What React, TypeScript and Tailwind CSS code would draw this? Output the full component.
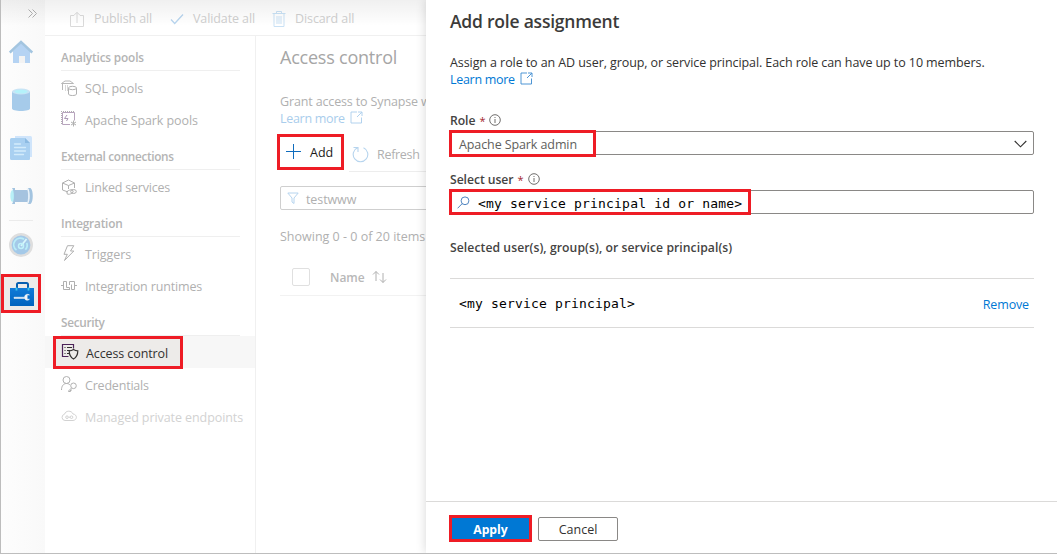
import React from "react";

type P = { className?: string };
const S = ({ className = "", children, vb = "0 0 16 16", w = 16, h = 16 }: { className?: string; children: React.ReactNode; vb?: string; w?: number; h?: number }) => (
  <svg width={w} height={h} viewBox={vb} fill="none" stroke="currentColor" className={`shrink-0 ${className}`}>{children}</svg>
);

const HomeIcon = () => (
  <S w={24} h={24} vb="0 0 24 24">
    <path d="M4 11v12h6v-7h6v7h5V11l-9-8z" fill="#b5d3f3" stroke="none" />
    <path d="M10 16h6v7h-6z" fill="#f3f3f3" stroke="none" />
    <path d="M.800 12.500 12 2l11.200 10.500" stroke="#a3c5e0" strokeWidth="2.4" />
  </S>
);
const DatabaseIcon = () => (
  <S w={24} h={24} vb="0 0 24 24">
    <path d="M3 3.500v17c0 1.500 4 2.500 9 2.500s9-1 9-2.500v-17z" fill="#a6cbea" stroke="none" />
    <ellipse cx="12" cy="3.500" rx="9" ry="3" fill="#c9e4f5" stroke="none" />
    <ellipse cx="12" cy="3.600" rx="6.500" ry="1.900" fill="#b4f2fa" stroke="none" />
  </S>
);
const DocsIcon = () => (
  <S w={24} h={26} vb="0 0 24 26">
    <path d="M6 1h15.500a1.500 1.500 0 0 1 1.500 1.500V22H6z" fill="#d0e5fb" stroke="none" />
    <path d="M2.500 3H16l5 5v16a1 1 0 0 1-1 1H2.500A1.500 1.500 0 0 1 1 23.500v-19A1.500 1.500 0 0 1 2.500 3z" fill="#a9d0f1" stroke="none" />
    <path d="M16 3v5h5z" fill="#8dbbe2" stroke="none" />
    <path d="M5.500 9h6M5.500 12.500h11M5.500 16h11M5.500 19.500h9" stroke="#d3ebfb" strokeWidth="1.300" strokeLinecap="round" />
  </S>
);
const PipeIcon = () => (
  <S w={24} h={18} vb="0 0 24 18">
    <path d="M5 3h14v12H5z" fill="#a5c3df" stroke="none" />
    <ellipse cx="3.500" cy="9" rx="2.200" ry="6" fill="#b8f0f7" stroke="none" />
    <path d="M3 1h3v2c1 3 1 9 0 12v2H3c2.500-3 2.500-13 0-16zM19 1h2.500c3 2 3 14 0 16H19c2.200-3 2.200-13 0-16z" fill="#a3c4e0" stroke="none" />
    <path d="M18.300 1.500c1.700 3 1.700 12 0 15" stroke="#e2eff9" />
  </S>
);
const GaugeIcon = () => (
  <S w={24} h={24} vb="0 0 24 24">
    <circle cx="12" cy="12" r="10.700" fill="#a4c9e8" stroke="#dedede" strokeWidth="2.600" />
    <path d="M7.500 17A6.500 6.500 0 0 1 15 6.300M17.800 10a6.500 6.500 0 0 1-1.500 6.700" stroke="#b9edf8" strokeWidth="1.700" />
    <path d="m12 13 5.500-7" stroke="#d9f7fc" strokeWidth="1.800" />
    <circle cx="12" cy="13" r="2.500" stroke="#c0f2fa" strokeWidth="1.500" />
  </S>
);
const ToolboxIcon = () => (
  <S w={26} h={26} vb="0 0 26 26">
    <defs><linearGradient id="tb" x1="0" y1="0" x2="0" y2="1"><stop stopColor="#117bd8" /><stop offset="1" stopColor="#0063bd" /></linearGradient></defs>
    <path d="M8 7V3.500C8 2.700 8.500 2 9.500 2h8c1 0 1.500.7 1.500 1.500V7" stroke="#075fb0" strokeWidth="2" />
    <path d="M1 7h24v18H1z" fill="url(#tb)" stroke="none" />
    <path d="M7.500 6.500v3M19.500 6.500v3" stroke="#3fc5ea" strokeWidth="1.800" />
    <path d="M5 16.200h10.500a3 3 0 0 1 5-2.200h-2.300v4.200h2.300a3 3 0 0 1-5-.800H5z" fill="#f2f5f8" stroke="#f2f5f8" strokeWidth=".5" />
  </S>
);
const PublishIcon = () => (
  <S className="text-[#dadada]"><path d="M5 4.500H1.500v11h13v-11H11M8 12V1.500M4.800 4.500 8 1.300l3.200 3.200" /></S>
);
const CheckIcon = () => (
  <S w={14} h={12} vb="0 0 14 12" className="text-[#b8d5ef]"><path d="m1 6.500 3.700 4L13 1.500" strokeWidth="1.300" /></S>
);
const TrashIcon = () => (
  <S w={14} h={18} vb="0 0 14 18" className="text-[#c9e1f5]"><path d="M.5 3.500h13M4.500 3V1.500h5V3M2 3.500v13h10v-13M5 6v8M7 6v8M9 6v8" /></S>
);
const SqlIcon = () => (
  <S className="-mt-[3px]"><path d="M.500 3.500 4 1h5l3.500 2.500zM1.500 4v6" strokeWidth=".9" /><path d="M4.500 5.500v5M6.500 5.500v5" strokeDasharray="1 1" /><path d="M7.500 8v6c0 1 2 1.500 4 1.500s4-.500 4-1.500V8" fill="white" /><ellipse cx="11.500" cy="8" rx="4" ry="1.700" fill="white" /></S>
);
const SparkIcon = () => (
  <S className="-mt-[4px]"><path d="M1.500 1.500h12v8M1.500 1.500v12H9" stroke="#b7a4bd" /><path d="M.5 0v14M0 .500h14" strokeDasharray="1 1" /><path d="M6 4 3.500 7.500H7L5.500 10" stroke="#ab9ab4" /><path d="M12.500 9.500v6M10 11l5 3M15 11l-5 3" /></S>
);
const LinkedIcon = () => (
  <S className="-mt-[3px]"><path d="M7 13 1.500 11V4L7.500 1l6 3v5M1.500 4l6 2.500 6-2.500M7.500 6.500V10" /><ellipse cx="9" cy="13" rx="3.200" ry="2" transform="rotate(-20 9 13)" /><ellipse cx="12.500" cy="12.500" rx="2.800" ry="2" /></S>
);
const BoltIcon = () => (
  <S className="-mt-[4px]"><path d="M6.500.700h6.300L9.500 6h3.300L3.500 15.500l2.800-6.200H3z" /></S>
);
const RuntimeIcon = () => (
  <S className="-mt-[2px]"><path d="M0 7.500h2.500M5.500 3.500h-3v8H5M5.500 3.500v6h3v2.500M5 11.500h3.500M8.500 7V3.500h5v8h-3V6.500M13.500 7.500H16" /></S>
);
const AccessIcon = () => (
  <S w={18} h={18} vb="0 0 18 18" className="-mt-[3px] text-[#323130]"><path d="M7.500 13.500h-6v-12h11v4" stroke="#4b2358" strokeWidth="1.200" /><path d="M3.500 4.500h1M6 4.500h5M3.500 7.500h1M6 7.500h3M3.500 10.500h1M6 10.500h2" /><path d="M12.500 6.500c1.500 1 2.500 1.300 4.300 1.300 0 4-1.200 6.600-4.300 8.200-3.100-1.600-4.300-4.200-4.300-8.200 1.800 0 2.800-.300 4.300-1.300z" strokeWidth="1.200" /></S>
);
const CredIcon = () => (
  <S className="-mt-[4px]"><circle cx="5.500" cy="4" r="3.500" /><path d="M.5 14c0-4 2-6.500 5-6.500 1.500 0 2.500.5 3.500 1.500" /><circle cx="12.500" cy="9.800" r="2.800" /><path d="m10.500 12-3 3v.500h2v-1.500H11" /></S>
);
const CloudIcon = () => (
  <S className="-mt-[4px]"><path d="M4 12.500a3.200 3.200 0 0 1-.5-6.300C4.500 2.500 10.500 2 12 6c4.500.500 4.500 6 0 6.500zM7.500 9.200h1.500" /><circle cx="6" cy="9.200" r="1.300" /><circle cx="10.500" cy="9.200" r="1.300" /></S>
);
const ExternalIcon = ({ className = "" }: P) => (
  <S w={13} h={13} vb="0 0 13 13" className={`-mt-[2px] ${className}`}><path d="M7 1H1v11h10.500V6.500M8 1h4v4M11.800 1.200 7 6" strokeWidth=".9" /></S>
);
const InfoIcon = () => (
  <S w={12} h={12} vb="0 0 12 12" className="text-[#605e5c]"><circle cx="6" cy="6" r="5.300" strokeWidth=".9" /><path d="M6 5v4M6 3v1" strokeWidth=".9" /></S>
);
const SearchIcon = () => (
  <S w={13} h={13} vb="0 0 13 13" className="text-[#3b76b8]"><circle cx="8" cy="4.800" r="3.900" strokeWidth=".9" /><path d="M5.200 7.600.600 12.300" strokeWidth=".9" /></S>
);

const railItems: React.ReactNode[] = [<HomeIcon />, <DatabaseIcon />, <DocsIcon />, <PipeIcon />];

function Rail() {
  return (
    <nav className="flex w-[44px] shrink-0 flex-col bg-gradient-to-r from-[#fdfdfd] to-[#f9f9f9]">
      <div className="flex h-[28px] items-center justify-end pr-[8px]">
        <S w={9} h={9} vb="0 0 9 9" className="-mt-[2px] text-[#b0b0b0]"><path d="m.500.500 4 4-4 4M4.500.500l4 4-4 4" /></S>
      </div>
      {railItems.map((icon, i) => (
        <div key={i} className="flex h-[48px] items-center pl-[8px]">{icon}</div>
      ))}
      <div className="ml-[8px] w-[24px] border-b border-[#ebebeb]" />
      <div className="flex h-[53px] items-start pl-[8px] pt-[12px]">
        <GaugeIcon />
      </div>
      <div className="flex h-[39px] w-[40px] items-center justify-center border-3 border-[#ee1c25] bg-[#edebe9] pl-[2px]">
        <ToolboxIcon />
      </div>
    </nav>
  );
}

function Heading({ text, track = "" }: { text: string; track?: string }) {
  return (
    <div className="flex h-[35px] items-end pl-[16px] pr-[15px]">
      <div className={`w-[179px] border-b border-[#efefef] pb-[4px] text-[11.800px] leading-[18px] font-semibold text-[#b4b4b4] ${track}`}>{text}</div>
    </div>
  );
}

function Item({ icon, text, track = "tracking-[-0.1px]", tone = "text-[#b0b0b0]" }: { icon: React.ReactNode; text: string; track?: string; tone?: string }) {
  return (
    <div className={`flex h-[32px] items-center gap-[8px] pl-[16px] pt-[4px] ${tone}`}>
      {icon}
      <span className={`whitespace-nowrap ${track}`}>{text}</span>
    </div>
  );
}

function SideNav() {
  return (
    <aside className="w-[211px] shrink-0 border-r border-[#f0f0f0]">
      <Heading text="Analytics pools" track="tracking-[-0.15px]" />
      <Item icon={<SqlIcon />} text="SQL pools" track="tracking-[0.02px]" />
      <Item icon={<SparkIcon />} text="Apache Spark pools" />
      <Heading text="External connections" track="tracking-[-0.34px]" />
      <Item icon={<LinkedIcon />} text="Linked services" track="tracking-[-0.22px]" />
      <Heading text="Integration" track="tracking-[-0.2px]" />
      <Item icon={<BoltIcon />} text="Triggers" />
      <Item icon={<RuntimeIcon />} text="Integration runtimes" track="tracking-[-0.15px]" />
      <Heading text="Security" track="tracking-[-0.3px]" />
      <div className="h-[32px] bg-[#f7f7f7] pl-[8px]">
        <div className="flex h-[33px] w-[130px] items-center gap-[7px] border-3 border-[#ee1c25] bg-[#edebe9] pl-[5px] pt-[2px] text-[#323130]">
          <AccessIcon />
          <span className="whitespace-nowrap tracking-[-0.1px]">Access control</span>
        </div>
      </div>
      <Item icon={<CredIcon />} text="Credentials" track="tracking-[-0.2px]" />
      <Item icon={<CloudIcon />} text="Managed private endpoints" track="tracking-[-0.08px]" tone="text-[#d2d2d2]" />
    </aside>
  );
}

function Toolbar() {
  return (
    <div className="flex h-[36px] shrink-0 items-center border-b border-[#f0f0f0] pl-[24px] pt-[2px] tracking-[-0.1px] text-[#cfcfcf]">
      <div className="flex w-[101px] items-center gap-[9px]"><PublishIcon /><span className="whitespace-nowrap">Publish all</span></div>
      <div className="flex w-[102px] items-center gap-[9px]"><CheckIcon /><span className="whitespace-nowrap">Validate all</span></div>
      <div className="flex items-center gap-[9px]"><TrashIcon /><span className="whitespace-nowrap">Discard all</span></div>
    </div>
  );
}

function Content() {
  return (
    <main className="flex w-[170px] flex-col whitespace-nowrap pl-[24px] text-[#b0b0b0]">
      <h1 className="mt-[9px] h-[24px] text-[18px] leading-[24px] tracking-[-0.22px] text-[#a6a6a6]">Access control</h1>
      <p className="mt-[24px] leading-[17px] tracking-[-0.14px]">Grant access to Synapse w</p>
      <p className="flex items-center gap-[5px] leading-[17px] text-[#a9cdec]"><span className="tracking-[-0.3px]">Learn more</span> <ExternalIcon /></p>
      <div className="mt-[7px] flex">
        <div className="-ml-[3px] flex h-[36px] w-[67px] shrink-0 items-center gap-[8px] border-3 border-[#ee1c25] bg-white pl-[6px] text-[#1b1a19]">
          <S w={16} h={16} className="text-[#0f6cbd]"><path d="M7.500 0v15M0 7.500h15" /></S>
          <span className="pt-[2px]">Add</span>
        </div>
        <div className="ml-[5px] flex h-[38px] w-[80px] items-center gap-[8px] border-b border-[#ededed] pl-[3px] pt-[3px]">
          <S className="text-[#b6d4ee]" w={17} h={17} vb="0 0 17 17"><path d="M5.500 1.800a7.300 7.300 0 1 0 6 0M1.500 1.500h4.500V6" strokeWidth="1.100" /></S>
          <span className="pt-[2px] tracking-[-0.3px]">Refresh</span>
        </div>
      </div>
      <div className="mt-[14px] flex h-[24px] w-[170px] shrink-0 items-center gap-[7px] rounded-[2px] border border-[#cfcfcf] pl-[6px] pt-[3px]">
        <S className="-mt-[3px] text-[#b6d4ee]" w={12} h={12} vb="0 0 12 12"><path d="M.8 1h10.400L7 6v5.500L5 10V6z" /></S>
        <span className="tracking-[-0.1px]">testwww</span>
      </div>
      <p className="mt-[18px] leading-[18px]">Showing 0 - 0 of 20 items</p>
      <div className="mt-[13px] flex h-[37px] w-[170px] shrink-0 items-center border-b border-[#f2f2f2] pl-[12px]">
        <span className="h-[18px] w-[18px] rounded-[2px] border border-[#e0e0e0]" />
        <span className="ml-[20px] pt-[2px] text-[12px] font-semibold text-[#b8b8b8]">Name</span>
        <S className="ml-[7px]" w={15} h={14} vb="0 0 15 14"><path d="M4 11V1.500M1 4.500l3-3 3 3M11 3v9.500M8 9.500l3 3 3-3" /></S>
      </div>
    </main>
  );
}

function Label({ text }: { text: string }) {
  return (
    <div className="flex h-[18px] items-center text-[12.200px] font-semibold text-[#444342]">
      <span className="pt-[2px] tracking-[-0.06px]">{text}</span>
      <span className="ml-[4px] pt-[2px] text-[11px] font-normal text-[#a4262c]">*</span>
      <span className="ml-[4px]"><InfoIcon /></span>
    </div>
  );
}

function Panel() {
  return (
    <section className="z-10 flex w-[631px] shrink-0 flex-col bg-white whitespace-nowrap shadow-[0_0_10px_rgba(0,0,0,0.16)]">
      <div className="flex grow flex-col pl-[24px] pr-[23px] text-[#323130]">
        <h2 className="mt-[8px] text-[17.500px] leading-[26px] font-semibold tracking-[-0.22px] text-[#3c3b3a]">Add role assignment</h2>
        <p className="mt-[20px] leading-[17px] tracking-[-0.085px]">Assign a role to an AD user, group, or service principal. Each role can have up to 10 members.</p>
        <p className="flex items-center gap-[5px] leading-[17px] text-[#0078d4]"><span className="tracking-[-0.3px]">Learn more</span> <ExternalIcon className="text-[#3b8ad0]" /></p>
        <div className="mt-[23px]"><Label text="Role" /></div>
        <div className="relative mt-[2px] flex h-[24px] items-center justify-between rounded-[2px] border border-[#8a8886] pl-[8px] pr-[6px] text-[#605e5c]">
          <span className="pt-[3px] tracking-[-0.1px]">Apache Spark admin</span>
          <S w={13} h={8} vb="0 0 13 8" className="mt-[2px] text-[#323130]"><path d="m.700 1 5.800 5.800L12.300 1" strokeWidth="1.100" /></S>
          <span className="absolute -left-[2px] -top-[2px] h-[27px] w-[147px] border-3 border-[#ee1c25]" />
        </div>
        <div className="mt-[15px]"><Label text="Select user" /></div>
        <div className="relative mt-[2px] flex h-[24px] items-center gap-[8px] rounded-[2px] border border-[#8a8886] pl-[6px] text-black">
          <SearchIcon />
          <span className="pt-[3px] font-['DejaVu_Sans_Mono',monospace] text-[13px] tracking-[0.18px]">&lt;my service principal id or name&gt;</span>
          <span className="absolute -left-[2px] -top-[2px] h-[26px] w-[302px] border-3 border-[#ee1c25]" />
        </div>
        <p className="mt-[25px] text-[12.200px] leading-[18px] font-semibold tracking-[0.06px] text-[#444342]">Selected user(s), group(s), or service principal(s)</p>
        <div className="mt-[21px] flex h-[50px] items-center justify-between border-y border-[#dbdad9] pl-[9px] pr-[5px]">
          <span className="pt-[2px] font-['DejaVu_Sans_Mono',monospace] text-[13px] tracking-[0.17px] text-black">&lt;my service principal&gt;</span>
          <a className="pt-[3px] tracking-[-0.15px] text-[#0078d4]">Remove</a>
        </div>
      </div>
      <footer className="flex h-[52px] items-start gap-[6px] border-t border-[#dbdad9] pl-[23px] pt-[13px]">
        <button className="h-[27px] w-[83px] border-3 border-[#ee1c25] bg-[#0078d4] pt-[2px] text-[12.200px] font-bold text-white">Apply</button>
        <button className="mt-[2px] h-[24px] w-[80px] rounded-[2px] border border-[#8a8886] bg-white pt-[2px] font-medium text-[#323130]">Cancel</button>
      </footer>
    </section>
  );
}

export default function App() {
  return (
    <div className="relative flex h-[554px] w-[1057px] overflow-hidden border-b border-l border-[#bdbdbd] bg-white font-['Open_Sans','Noto_Sans',sans-serif] text-[12.500px] leading-[18px]">
      <Rail />
      <div className="flex w-[381px] shrink-0 flex-col">
        <Toolbar />
        <div className="flex grow">
          <SideNav />
          <Content />
        </div>
      </div>
      <div className="pointer-events-none absolute left-0 top-0 h-[26px] w-[425px] bg-gradient-to-b from-black/6 to-transparent" />
      <Panel />
    </div>
  );
}
